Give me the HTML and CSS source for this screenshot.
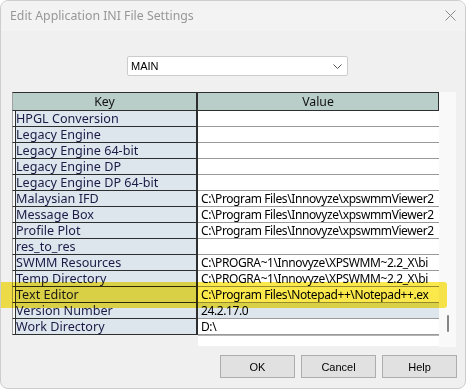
FILE: index.html
```html
<!DOCTYPE html>
<html>
<head>
<meta charset="utf-8">
<link rel="stylesheet" href="styles.css">
</head>
<body>
<div class="window">
  <div class="titlebar">
    <span class="title">Edit Application INI File Settings</span>
    <svg class="close" width="11" height="11" viewBox="0 0 11 11"><path d="M0.5 0.5 L10.5 10.5 M10.5 0.5 L0.5 10.5" stroke="#8a8a8a" stroke-width="1" fill="none"/></svg>
  </div>
  <div class="body">
    <div class="combo">
      <span class="combo-text">MAIN</span>
      <svg class="chev" width="9" height="5" viewBox="0 0 9 5"><path d="M0.5 0.5 L4.5 4.5 L8.5 0.5" stroke="#555" stroke-width="1" fill="none"/></svg>
    </div>
    <div class="gridctl">
      <div class="table">
        <div class="row head"><div class="k">Key</div><div class="v">Value</div></div>
        <div class="row"><div class="k">HPGL Conversion</div><div class="v"></div></div>
        <div class="row"><div class="k">Legacy Engine</div><div class="v"></div></div>
        <div class="row"><div class="k">Legacy Engine 64-bit</div><div class="v"></div></div>
        <div class="row"><div class="k">Legacy Engine DP</div><div class="v"></div></div>
        <div class="row"><div class="k">Legacy Engine DP 64-bit</div><div class="v"></div></div>
        <div class="row"><div class="k">Malaysian IFD</div><div class="v">C:\Program Files\Innovyze\xpswmmViewer2</div></div>
        <div class="row"><div class="k">Message Box</div><div class="v">C:\Program Files\Innovyze\xpswmmViewer2</div></div>
        <div class="row"><div class="k">Profile Plot</div><div class="v">C:\Program Files\Innovyze\xpswmmViewer2</div></div>
        <div class="row"><div class="k">res_to_res</div><div class="v"></div></div>
        <div class="row"><div class="k">SWMM Resources</div><div class="v">C:\PROGRA~1\Innovyze\XPSWMM~2.2_X\bi</div></div>
        <div class="row"><div class="k">Temp Directory</div><div class="v">C:\PROGRA~1\Innovyze\XPSWMM~2.2_X\bi</div></div>
        <div class="row"><div class="k">Text Editor</div><div class="v">C:\Program Files\Notepad++\Notepad++.ex</div></div>
        <div class="row sel"><div class="k">Version Number</div><div class="v">24.2.17.0</div></div>
        <div class="row"><div class="k">Work Directory</div><div class="v">D:\</div></div>
        <div class="filler"></div>
      </div>
      <div class="vscroll"><div class="thumb"></div></div>
    </div>
    <div class="buttons">
      <button class="btn">OK</button>
      <button class="btn">Cancel</button>
      <button class="btn">Help</button>
    </div>
  </div>
  <div class="highlight"></div>
</div>
</body>
</html>
```
FILE: styles.css
```css
* { box-sizing: border-box; }
html, body { margin: 0; padding: 0; background: #ffffff; }
body { width: 467px; height: 391px; overflow: hidden; }

.window {
  position: relative;
  width: 466px;
  height: 389px;
  border: 1px solid #cdcdcd;
  border-radius: 8px;
  background: #f0f0f0;
  overflow: hidden;
  font-family: "Noto Sans", "DejaVu Sans", sans-serif;
}

.titlebar {
  height: 30px;
  background: #f3f3f3;
  display: flex;
  align-items: center;
  justify-content: space-between;
  padding: 0 9px 0 9px;
}
.title {
  font-size: 12.3px;
  color: #979797;
  margin-top: -1px;
}
.close { margin-top: -2px; }

.body { padding-top: 25px; }

.combo {
  margin-left: 126px;
  width: 221px;
  height: 20px;
  background: #ffffff;
  border: 1px solid #cccccc;
  border-radius: 2px;
  display: flex;
  align-items: center;
  justify-content: space-between;
  padding: 0 5px 0 3px;
}
.combo-text {
  font-family: "Liberation Sans", Arial, sans-serif;
  font-size: 11px;
  color: #000;
}
.chev { margin-top: 1px; }

.gridctl {
  margin-top: 16px;
  margin-left: 11px;
  display: flex;
  height: 255px;
}
.table {
  width: 427px;
  display: flex;
  flex-direction: column;
}
.row {
  display: grid;
  grid-template-columns: 186px 241px;
  grid-template-rows: 16px;
  height: 16px;
  flex: none;
  font-size: 12px;
  line-height: 14px;
}
.row .k,
.row .v {
  height: 16px;
  padding-top: 1px;
  white-space: nowrap;
  overflow-x: clip;
  overflow-y: visible;
}
.row .k {
  background: #dde5ed;
  color: #1b1b45;
  font-size: 12.6px;
  border-left: 1px solid #a0a0a0;
  border-bottom: 1px solid #2e2e2e;
  border-right: 2px solid #2e2e2e;
  box-shadow: inset 2px 0 0 #f7f9fb, inset 3px 0 0 #2e2e2e;
  padding-left: 3px;
}
.row .v {
  background: #ffffff;
  color: #000;
  letter-spacing: -0.4px;
  border-bottom: 1px solid #9a9a9a;
  padding-left: 3px;
}
.row.sel .v { background: #dde5ed; }

.row.head { height: 19px; grid-template-rows: 19px; line-height: 17px; }
.row.head .k,
.row.head .v {
  height: 19px;
  padding-top: 0;
  background: #b9cdc9;
  color: #111;
  font-size: 12.3px;
  letter-spacing: 0;
  text-align: center;
  border-top: 1px solid #2e2e2e;
  border-bottom: 1px solid #2e2e2e;
  padding-left: 0;
}
.row.head .k { box-shadow: none; border-left: 1px solid #a0a0a0; }
.row.head .v { border-right: 1px solid #2e2e2e; }

.filler {
  height: 11px;
  flex: none;
  margin-left: 186px;
  width: 241px;
  background: #ffffff;
  border-top: 1px solid #b4b4b4;
}

.vscroll {
  width: 17px;
  height: 255px;
  background: #f9f9f9;
  position: relative;
}
.thumb {
  position: absolute;
  left: 8px;
  top: 223px;
  width: 2px;
  height: 17px;
  background: #858585;
  border-radius: 1px;
}

.buttons {
  margin-top: 8px;
  display: flex;
  justify-content: flex-end;
  gap: 6px;
  padding-right: 8px;
}
.btn {
  width: 75px;
  height: 23px;
  margin: 0;
  background: #e1e1e1;
  border: 1px solid #adadad;
  border-radius: 0;
  font-family: "Liberation Sans", Arial, sans-serif;
  font-size: 11px;
  color: #000;
  padding: 0;
}

.highlight {
  position: absolute;
  left: -1px;
  top: 281px;
  width: 447px;
  height: 26px;
  background: #fbe84a;
  mix-blend-mode: multiply;
  border-radius: 0 3px 3px 0;
}
```
